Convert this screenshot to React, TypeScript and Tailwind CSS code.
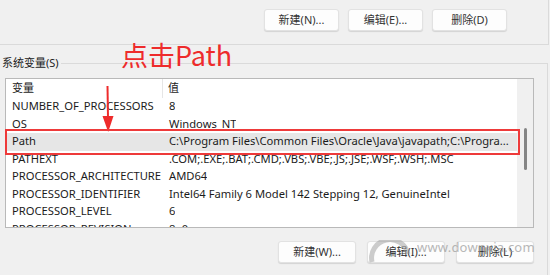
import React from 'react';

// System environment variables (Windows dialog, lower half)
const ROWS = [
  { name: 'NUMBER_OF_PROCESSORS', value: '8' },
  { name: 'OS', value: 'Windows_NT' },
  { name: 'Path', value: 'C:\\Program Files\\Common Files\\Oracle\\Java\\javapath;C:\\Progra...', selected: true },
  { name: 'PATHEXT', value: '.COM;.EXE;.BAT;.CMD;.VBS;.VBE;.JS;.JSE;.WSF;.WSH;.MSC' },
  { name: 'PROCESSOR_ARCHITECTURE', value: 'AMD64' },
  { name: 'PROCESSOR_IDENTIFIER', value: 'Intel64 Family 6 Model 142 Stepping 12, GenuineIntel' },
  { name: 'PROCESSOR_LEVEL', value: '6' },
  { name: 'PROCESSOR_REVISION', value: '8e0c' },
];

const FONT = { fontFamily: '"Noto Sans", "Noto Sans CJK SC", sans-serif' };

function WinButton({ label, wide }: { label: string; wide?: boolean }) {
  return (
    <button
      className={
        (wide ? 'w-[78px] ' : 'w-[75px] ') +
        'h-[22px] rounded-[3px] border border-[#e2e2e2] bg-[#fdfdfd] shadow-[0_1px_1px_rgba(0,0,0,0.12)] text-[11px] text-[#333] flex items-center justify-center'
      }
    >
      {label}
    </button>
  );
}

export default function App() {
  return (
    <div className="relative w-[550px] h-[275px] overflow-hidden bg-[#f0f0f0] text-[#1b1b1b]" style={FONT}>
      {/* user variables group (bottom edge only visible) */}
      <div className="w-[549px] h-[45px] border-b border-r border-[#dadada] flex justify-end gap-[9px] pt-[9px] pr-[41px]">
        <WinButton label="新建(N)..." />
        <WinButton label="编辑(E)..." />
        <WinButton label="删除(D)" />
      </div>

      {/* system variables group */}
      <div className="mt-[11px] w-[548px]">
        <div className="flex h-[14px]">
          <span className="pl-[2px] pr-[2px] text-[11px] leading-[14px] text-[#222]">系统变量(S)</span>
          <div className="flex-1 mt-[7px] border-t border-r border-[#dadada]" />
        </div>
        <div className="border-r border-[#dadada] pl-[5px] pt-[8px] h-[205px]">
          <div className="w-[529px] h-[150px] border border-[#b9b9b9] bg-white flex overflow-hidden">
            <div className="flex-1 flex flex-col text-[11.2px]">
              <div className="flex h-[19px] shrink-0 items-center">
                <div className="w-[157px] pl-[6px] h-full flex items-center border-r border-[#e6e6e6] text-[11px]">变量</div>
                <div className="pl-[5px] text-[11px]">值</div>
              </div>
              {ROWS.map((r) => (
                <div
                  key={r.name}
                  className={'flex h-[17.5px] shrink-0 items-center whitespace-nowrap ' + (r.selected ? 'bg-[#e6e6e6]' : '')}
                >
                  <div className="w-[158px] pl-[6px] overflow-hidden">{r.name}</div>
                  <div className="pl-[5px] overflow-hidden">{r.value}</div>
                </div>
              ))}
            </div>
            {/* scrollbar */}
            <div className="w-[16px] bg-[#f0f0f0] flex justify-center pt-[49px]">
              <div className="w-[3px] h-[42px] rounded-full bg-[#858585] ml-[1px]" />
            </div>
          </div>
          <div className="flex justify-end gap-[11px] mt-[13px] pr-[13px]">
            <WinButton wide label="新建(W)..." />
            <WinButton wide label="编辑(I)..." />
            <WinButton wide label="删除(L)" />
          </div>
        </div>
      </div>

      {/* red annotations */}
      <div
        className="absolute left-[121px] top-[38px] text-[27px] leading-[34px] text-[#ee2b2b]"
        style={{ fontFamily: '"Noto Sans CJK SC", "Noto Sans", sans-serif' }}
      >
        点击Path
      </div>
      <svg className="absolute left-[100px] top-[84px]" width="16" height="50" viewBox="0 0 16 50">
        <line x1="7.5" y1="2" x2="8" y2="34" stroke="#ee2b2b" strokeWidth="2" />
        <polygon points="2.5,32 13.5,32 8.2,48" fill="#ee2b2b" />
      </svg>
      <div className="absolute left-[5px] top-[129px] w-[515px] h-[26px] border-2 border-[#ee3a3a]" />

      {/* watermark */}
      <svg className="absolute left-[368px] top-[240px] opacity-50" width="44" height="24" viewBox="0 0 44 24">
        <path d="M4 22 A18 18 0 0 1 40 14" fill="none" stroke="#9c9c9c" strokeWidth="5" />
      </svg>
      <div className="absolute left-[417px] top-[238px] text-[13px] text-[#9a9a9a] opacity-70 tracking-[0.2px]">
        www.downxia.com
      </div>
    </div>
  );
}
